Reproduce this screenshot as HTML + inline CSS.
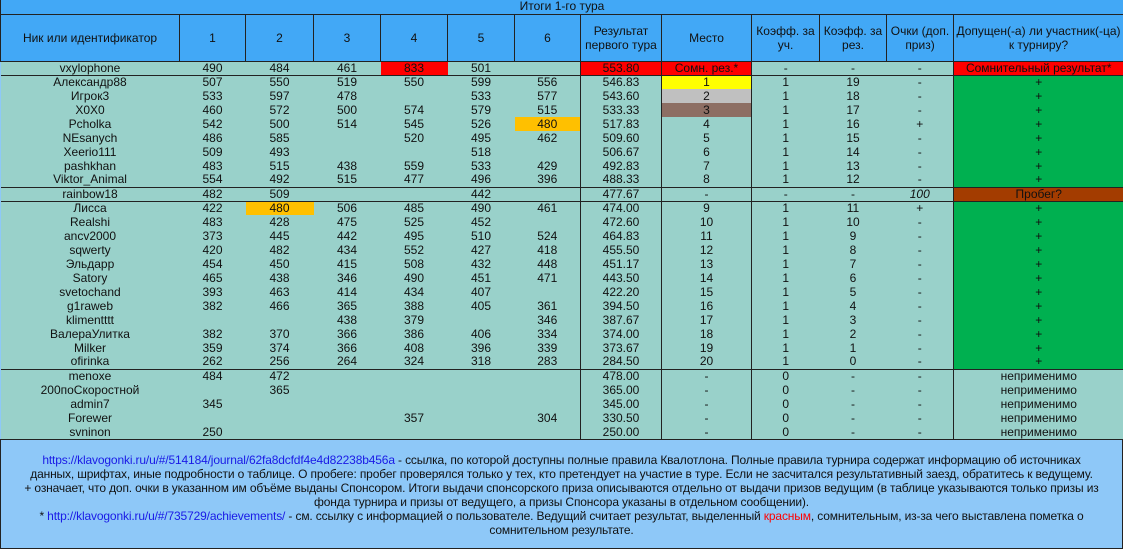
<!DOCTYPE html>
<html><head><meta charset="utf-8">
<style>
*{margin:0;padding:0;box-sizing:border-box}
body{width:1123px;height:549px;overflow:hidden;background:#8ec8f8;font-family:"Liberation Sans",Arial,sans-serif;font-size:12px;color:#111}
table{border-collapse:collapse;table-layout:fixed;width:1123px;position:absolute;left:0;top:0}
td{padding:0;text-align:center;white-space:nowrap;overflow:hidden;height:14px;line-height:13px;background:#99d1ca}
.t td{background:#42a8f6;height:14px;border:1px solid #222;border-top:none}
.h td{background:#42a8f6;height:47px;border:1px solid #222;line-height:14px}
td.b{border-left:1px solid #222}
tr.g td{border-top:1px solid #222}
.r{background:#ff0000!important}
.y{background:#ffff00!important}
.s{background:#c0c0c0!important}
.br{background:#8d6e63!important}
.o{background:#ffc000!important}
.gr{background:#00b050!important}
.pb{background:#a33c00!important}
#f{position:absolute;left:0;top:439px;width:1123px;height:110px;border-top:1px solid #222;border-left:1px solid #222;border-right:1px solid #222;border-bottom:1px solid #222;background:#8ec8f8;text-align:center;padding-top:13px;line-height:14px;white-space:nowrap;letter-spacing:-0.15px;font-size:12px}
a{color:#1a1ae6;text-decoration:none}
.red{color:#ff0000}
</style></head><body>
<table>
<colgroup><col style="width:179px"><col style="width:66px"><col style="width:68px"><col style="width:67px"><col style="width:67px"><col style="width:67px"><col style="width:66px"><col style="width:81px"><col style="width:90px"><col style="width:68px"><col style="width:67px"><col style="width:67px"><col style="width:170px"></colgroup>
<tr class="t"><td colspan="13">Итоги 1-го тура</td></tr>
<tr class="h"><td>Ник или идентификатор</td><td>1</td><td>2</td><td>3</td><td>4</td><td>5</td><td>6</td><td>Результат<br>первого тура</td><td>Место</td><td>Коэфф. за<br>уч.</td><td>Коэфф. за<br>рез.</td><td>Очки (доп.<br>приз)</td><td>Допущен(-а) ли участник(-ца)<br>к турниру?</td></tr>
<tr class="g"><td>vxylophone</td><td>490</td><td>484</td><td>461</td><td class="r">833</td><td>501</td><td></td><td class="b r">553.80</td><td class="b r">Сомн. рез.*</td><td class="b">-</td><td>-</td><td>-</td><td class="b r">Сомнительный результат*</td></tr>
<tr class="g"><td>Александр88</td><td>507</td><td>550</td><td>519</td><td>550</td><td>599</td><td>556</td><td class="b">546.83</td><td class="b y">1</td><td class="b">1</td><td>19</td><td>-</td><td class="b gr">+</td></tr>
<tr><td>Игрок3</td><td>533</td><td>597</td><td>478</td><td></td><td>533</td><td>577</td><td class="b">543.60</td><td class="b s">2</td><td class="b">1</td><td>18</td><td>-</td><td class="b gr">+</td></tr>
<tr><td>X0X0</td><td>460</td><td>572</td><td>500</td><td>574</td><td>579</td><td>515</td><td class="b">533.33</td><td class="b br">3</td><td class="b">1</td><td>17</td><td>-</td><td class="b gr">+</td></tr>
<tr><td>Pcholka</td><td>542</td><td>500</td><td>514</td><td>545</td><td>526</td><td class="o">480</td><td class="b">517.83</td><td class="b">4</td><td class="b">1</td><td>16</td><td>+</td><td class="b gr">+</td></tr>
<tr><td>NEsanych</td><td>486</td><td>585</td><td></td><td>520</td><td>495</td><td>462</td><td class="b">509.60</td><td class="b">5</td><td class="b">1</td><td>15</td><td>-</td><td class="b gr">+</td></tr>
<tr><td>Xeerio111</td><td>509</td><td>493</td><td></td><td></td><td>518</td><td></td><td class="b">506.67</td><td class="b">6</td><td class="b">1</td><td>14</td><td>-</td><td class="b gr">+</td></tr>
<tr><td>pashkhan</td><td>483</td><td>515</td><td>438</td><td>559</td><td>533</td><td>429</td><td class="b">492.83</td><td class="b">7</td><td class="b">1</td><td>13</td><td>-</td><td class="b gr">+</td></tr>
<tr><td>Viktor_Animal</td><td>554</td><td>492</td><td>515</td><td>477</td><td>496</td><td>396</td><td class="b">488.33</td><td class="b">8</td><td class="b">1</td><td>12</td><td>-</td><td class="b gr">+</td></tr>
<tr class="g"><td>rainbow18</td><td>482</td><td>509</td><td></td><td></td><td>442</td><td></td><td class="b">477.67</td><td class="b">-</td><td class="b">-</td><td>-</td><td><i>100</i></td><td class="b pb">Пробег?</td></tr>
<tr class="g"><td>Лисса</td><td>422</td><td class="o">480</td><td>506</td><td>485</td><td>490</td><td>461</td><td class="b">474.00</td><td class="b">9</td><td class="b">1</td><td>11</td><td>+</td><td class="b gr">+</td></tr>
<tr><td>Realshi</td><td>483</td><td>428</td><td>475</td><td>525</td><td>452</td><td></td><td class="b">472.60</td><td class="b">10</td><td class="b">1</td><td>10</td><td>-</td><td class="b gr">+</td></tr>
<tr><td>ancv2000</td><td>373</td><td>445</td><td>442</td><td>495</td><td>510</td><td>524</td><td class="b">464.83</td><td class="b">11</td><td class="b">1</td><td>9</td><td>-</td><td class="b gr">+</td></tr>
<tr><td>sqwerty</td><td>420</td><td>482</td><td>434</td><td>552</td><td>427</td><td>418</td><td class="b">455.50</td><td class="b">12</td><td class="b">1</td><td>8</td><td>-</td><td class="b gr">+</td></tr>
<tr><td>Эльдарр</td><td>454</td><td>450</td><td>415</td><td>508</td><td>432</td><td>448</td><td class="b">451.17</td><td class="b">13</td><td class="b">1</td><td>7</td><td>-</td><td class="b gr">+</td></tr>
<tr><td>Satory</td><td>465</td><td>438</td><td>346</td><td>490</td><td>451</td><td>471</td><td class="b">443.50</td><td class="b">14</td><td class="b">1</td><td>6</td><td>-</td><td class="b gr">+</td></tr>
<tr><td>svetochand</td><td>393</td><td>463</td><td>414</td><td>434</td><td>407</td><td></td><td class="b">422.20</td><td class="b">15</td><td class="b">1</td><td>5</td><td>-</td><td class="b gr">+</td></tr>
<tr><td>g1raweb</td><td>382</td><td>466</td><td>365</td><td>388</td><td>405</td><td>361</td><td class="b">394.50</td><td class="b">16</td><td class="b">1</td><td>4</td><td>-</td><td class="b gr">+</td></tr>
<tr><td>klimentttt</td><td></td><td></td><td>438</td><td>379</td><td></td><td>346</td><td class="b">387.67</td><td class="b">17</td><td class="b">1</td><td>3</td><td>-</td><td class="b gr">+</td></tr>
<tr><td>ВалераУлитка</td><td>382</td><td>370</td><td>366</td><td>386</td><td>406</td><td>334</td><td class="b">374.00</td><td class="b">18</td><td class="b">1</td><td>2</td><td>-</td><td class="b gr">+</td></tr>
<tr><td>Milker</td><td>359</td><td>374</td><td>366</td><td>408</td><td>396</td><td>339</td><td class="b">373.67</td><td class="b">19</td><td class="b">1</td><td>1</td><td>-</td><td class="b gr">+</td></tr>
<tr><td>ofirinka</td><td>262</td><td>256</td><td>264</td><td>324</td><td>318</td><td>283</td><td class="b">284.50</td><td class="b">20</td><td class="b">1</td><td>0</td><td>-</td><td class="b gr">+</td></tr>
<tr class="g"><td>menoxe</td><td>484</td><td>472</td><td></td><td></td><td></td><td></td><td class="b">478.00</td><td class="b">-</td><td class="b">0</td><td>-</td><td>-</td><td class="b">неприменимо</td></tr>
<tr><td>200поСкоростной</td><td></td><td>365</td><td></td><td></td><td></td><td></td><td class="b">365.00</td><td class="b">-</td><td class="b">0</td><td>-</td><td>-</td><td class="b">неприменимо</td></tr>
<tr><td>admin7</td><td>345</td><td></td><td></td><td></td><td></td><td></td><td class="b">345.00</td><td class="b">-</td><td class="b">0</td><td>-</td><td>-</td><td class="b">неприменимо</td></tr>
<tr><td>Forewer</td><td></td><td></td><td></td><td>357</td><td></td><td>304</td><td class="b">330.50</td><td class="b">-</td><td class="b">0</td><td>-</td><td>-</td><td class="b">неприменимо</td></tr>
<tr><td>svninon</td><td>250</td><td></td><td></td><td></td><td></td><td></td><td class="b">250.00</td><td class="b">-</td><td class="b">0</td><td>-</td><td>-</td><td class="b">неприменимо</td></tr>
</table>
<div id="f">
<a>https://klavogonki.ru/u/#/514184/journal/62fa8dcfdf4e4d82238b456a</a> - ссылка, по которой доступны полные правила Квалотлона. Полные правила турнира содержат информацию об источниках<br>
данных, шрифтах, иные подробности о таблице. О пробеге: пробег проверялся только у тех, кто претендует на участие в туре. Если не засчитался результативный заезд, обратитесь к ведущему.<br>
+ означает, что доп. очки в указанном им объёме выданы Спонсором. Итоги выдачи спонсорского приза описываются отдельно от выдачи призов ведущим (в таблице указываются только призы из<br>
фонда турнира и призы от ведущего, а призы Спонсора указаны в отдельном сообщении).<br>
* <a>http://klavogonki.ru/u/#/735729/achievements/</a> - см. ссылку с информацией о пользователе. Ведущий считает результат, выделенный <span class="red">красным</span>, сомнительным, из-за чего выставлена пометка о<br>
сомнительном результате.
</div>
</body></html>
